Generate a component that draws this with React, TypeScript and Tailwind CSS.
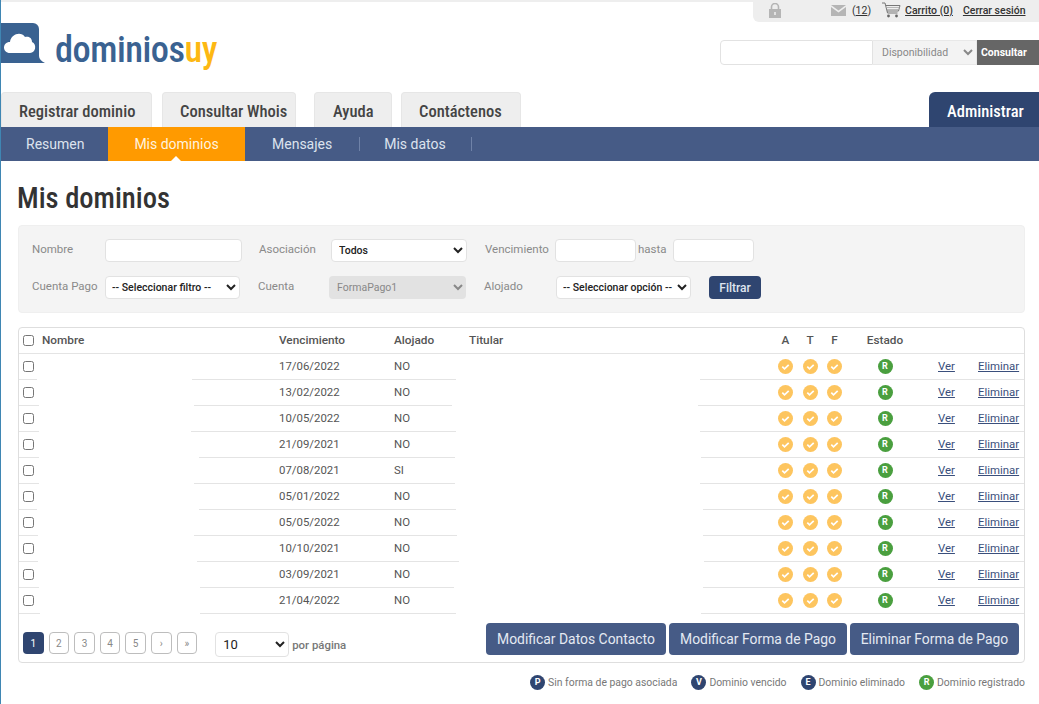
import React from "react";

const rows = [
  { d: "17/06/2022", a: "NO", g: [18, 173], h: [456, 700] },
  { d: "13/02/2022", a: "NO", g: [20, 175], h: [452, 698] },
  { d: "10/05/2022", a: "NO", g: [20, 172], h: [456, 700] },
  { d: "21/09/2021", a: "NO", g: [20, 180], h: [455, 701] },
  { d: "07/08/2021", a: "SI", g: [20, 175], h: [455, 700] },
  { d: "05/01/2022", a: "NO", g: [18, 180], h: [456, 703] },
  { d: "05/05/2022", a: "NO", g: [19, 175], h: [457, 703] },
  { d: "10/10/2021", a: "NO", g: [19, 178], h: [459, 704] },
  { d: "03/09/2021", a: "NO", g: [20, 181], h: [454, 703] },
  { d: "21/04/2022", a: "NO", g: [21, 181], h: [456, 701] },
];

const cols = "grid grid-cols-[23px_236px_116px_74px_305px_25px_24px_25px_76px_55px_1fr] items-center";

function Check() {
  return (
    <svg width="15" height="15" viewBox="0 0 15 15" className="mx-auto block">
      <circle cx="7.5" cy="7.5" r="7.5" fill="#fdc55f" />
      <path d="M4.3 7.7l2.2 2.1 4.2-4" fill="none" stroke="#fff" strokeWidth="1.7" />
    </svg>
  );
}

function Badge({ l, bg }: { l: string; bg: string }) {
  return (
    <span className={`w-[15px] h-[15px] ${bg} rounded-full inline-flex items-center justify-center text-white text-[9px] font-bold leading-none shrink-0`}>{l}</span>
  );
}

function Box() {
  return <input type="checkbox" className="w-[11px] h-[11px] m-0 block" />;
}

const field = "h-[23px] bg-white border border-[#e2e2e2] rounded-[4px]";
const sel = "h-[23px] bg-white border border-[#e2e2e2] rounded-[4px] text-[10.5px] font-medium text-[#222]";
const lab = "text-[11.5px] text-[#8a8a8a]";
const tab = "h-[35px] flex items-center pt-[5px] bg-[#eeeeee] border border-b-0 border-[#e6e6e6] rounded-t-[4px]";

export default function App() {
  return (
    <div className="w-[1039px] h-[704px] overflow-hidden bg-white border-l border-[#3f86b3] font-[Roboto,sans-serif] text-[#555]">
      <header className="h-[92px] flex justify-between border-t-2 border-[#eeeeee]">
        <div className="pt-[21px] flex items-start">
          <svg width="46" height="41" viewBox="0 0 46 41" className="-ml-px block">
            <path d="M0 0h33a6 6 0 0 1 6 6v27q0 4 6 7H0z" fill="#3a6291" />
            <path d="M10 30c-8 0-8-11 0-11 1-8 11-11 15-5 5-1 7 2 7 5 5 2 4 11-2 11z" fill="#fff" />
          </svg>
          <div className="ml-[9px] mt-[5px] text-[36.4px] leading-[44px] font-medium tracking-[-0.5px] [font-stretch:condensed] text-[#3a6291]">
            dominios<span className="text-[#fdb813]">uy</span>
          </div>
        </div>
        <div className="flex flex-col items-end">
          <div className="w-[286px] h-[20px] pb-[3px] bg-[#eeeeee] rounded-bl-[6px] flex items-center text-[10.5px] text-[#333]">
            <svg width="12" height="15" viewBox="0 0 12 15" className="ml-[16px]">
              <path d="M2.5 6V4a3.5 3.5 0 0 1 7 0v2" fill="none" stroke="#b5b5b5" strokeWidth="1.6" />
              <path d="M0 6h12v9H0z" fill="#b5b5b5" />
              <path d="M5.2 9h1.6v3H5.200z" fill="#eee" />
            </svg>
            <svg width="15" height="11" viewBox="0 0 15 11" className="ml-[50px]">
              <path d="M0 0h15L7.500 5.500z" fill="#b5b5b5" />
              <path d="M0 2l7.500 5.500L15 2v9H0z" fill="#b5b5b5" />
            </svg>
            <span className="ml-[6px]">(<u>12</u>)</span>
            <svg width="19" height="16" viewBox="0 0 19 16" className="ml-[11px] -mt-[2px]">
              <path d="M0 1h3l2.500 10h10M3.700 3.500H18l-1.500 5.500H5" fill="none" stroke="#777" strokeWidth="1" />
              <path d="M5 5.500h12.500M5 7.500h12" stroke="#aaa" strokeWidth="0.8" />
              <circle cx="6.500" cy="14" r="1.400" fill="#666" />
              <circle cx="14.500" cy="14" r="1.400" fill="#666" />
            </svg>
            <a className="ml-[4px] underline font-medium">Carrito (0)</a>
            <a className="ml-[10px] underline font-medium">Cerrar sesión</a>
          </div>
          <div className="mt-[18px] flex h-[25px]">
            <input className="w-[153px] bg-white border border-[#e2e2e2] rounded-l-[4px]" />
            <select className="w-[104px] bg-[#f3f3f3] border-y border-r border-[#e8e8e8] text-[10.5px] text-[#888] pl-[5px]">
              <option>Disponibilidad</option>
            </select>
            <button className="w-[62px] bg-[#666666] text-white text-[10.5px] font-bold text-left pl-[4px]">Consultar</button>
          </div>
        </div>
      </header>

      <div className="h-[35px] flex items-end text-[16.5px] font-medium [font-stretch:condensed] text-[#444]">
        <div className={`${tab} w-[151px] pl-[17px]`}>Registrar dominio</div>
        <div className={`${tab} ml-[10px] w-[134px] pl-[17px]`}>Consultar Whois</div>
        <div className={`${tab} ml-[18px] w-[78px] pl-[18px]`}>Ayuda</div>
        <div className={`${tab} ml-[9px] w-[120px] pl-[17px]`}>Contáctenos</div>
        <div className="ml-auto w-[110px] h-[35px] pt-[5px] pl-[18px] flex items-center bg-[#2f4570] text-white rounded-tl-[6px]">Administrar</div>
      </div>

      <nav className="h-[34px] bg-[#465b86] flex items-center text-[14px] text-[#dde3ee]">
        <span className="w-[107px] pl-[25px]">Resumen</span>
        <span className="relative w-[137px] h-full bg-[#ff9a00] flex items-center justify-center text-[#fff3df]">
          Mis dominios
          <span className="absolute bottom-0 left-[63px] w-0 h-0 border-x-[5px] border-x-transparent border-b-[5px] border-b-white" />
        </span>
        <span className="ml-[27px] pr-[27px] border-r border-[#6f82a8] leading-[14px]">Mensajes</span>
        <span className="ml-[24px] pr-[25px] border-r border-[#6f82a8] leading-[14px]">Mis datos</span>
      </nav>

      <main className="pl-[17px] w-[1024px]">
        <h1 className="mt-[19px] -ml-px text-[28.6px] leading-[36px] font-medium [font-stretch:condensed] text-[#333]">Mis dominios</h1>

        <section className="mt-[9px] h-[88px] bg-[#f4f4f4] border border-[#efefef] rounded-[4px] pl-[13px] pt-[13px]">
          <div className="flex items-center h-[23px]">
            <span className={`${lab} w-[73px] -mt-[2px]`}>Nombre</span>
            <input className={`${field} w-[137px]`} />
            <span className={`${lab} ml-[17px] w-[72px] -mt-[2px]`}>Asociación</span>
            <select className={`${sel} w-[136px] pl-[3px]`}><option>Todos</option></select>
            <span className={`${lab} ml-[18px] w-[70px] -mt-[2px]`}>Vencimiento</span>
            <input className={`${field} w-[81px]`} />
            <span className={`${lab} ml-[2px] w-[35px] -mt-[2px]`}>hasta</span>
            <input className={`${field} w-[81px]`} />
          </div>
          <div className="flex items-center h-[23px] mt-[14px]">
            <span className={`${lab} w-[73px] -mt-[2px]`}>Cuenta Pago</span>
            <select className={`${sel} w-[135px] pl-[2px]`}><option>-- Seleccionar filtro --</option></select>
            <span className={`${lab} ml-[18px] w-[71px] -mt-[2px]`}>Cuenta</span>
            <select disabled className="h-[23px] w-[137px] pl-[4px] bg-[#e2e2e2] rounded-[4px] text-[10.5px] text-[#888]"><option>FormaPago1</option></select>
            <span className={`${lab} ml-[18px] w-[72px] -mt-[2px]`}>Alojado</span>
            <select className={`${sel} w-[135px] pl-[2px]`}><option>-- Seleccionar opción --</option></select>
            <button className="ml-[18px] w-[52px] h-[23px] bg-[#2f4570] text-[#dfe5ef] text-[12px] font-medium rounded-[4px]">Filtrar</button>
          </div>
        </section>

        <section className="mt-[14px] h-[336px] border border-[#dedede] rounded-[4px] text-[11.4px]">
          <div className={`${cols} h-[26px] border-b border-[#e4e4e4] text-[11.8px] font-medium text-[#555]`}>
            <span className="pl-[4px]"><Box /></span>
            <span>Nombre</span>
            <span className="pl-px">Vencimiento</span>
            <span>Alojado</span>
            <span className="pl-px">Titular</span>
            <span className="text-center">A</span>
            <span className="text-center">T</span>
            <span className="text-center">F</span>
            <span className="text-center">Estado</span>
            <span />
            <span />
          </div>
          {rows.map((r) => (
            <div key={r.d} className={`${cols} relative h-[26px] border-b border-[#e4e4e4]`}>
              <span className="pl-[4px]"><Box /></span>
              <span />
              <span className="pl-px">{r.d}</span>
              <span>{r.a}</span>
              <span />
              <Check />
              <Check />
              <Check />
              <span className="flex justify-center"><Badge l="R" bg="bg-[#4a9f3f]" /></span>
              <a className="pl-[15px] underline text-[#3a4f7c]">Ver</a>
              <a className="underline text-[#3a4f7c]">Eliminar</a>
              <i className="absolute -bottom-px h-[2px] bg-white" style={{ left: r.g[0], width: r.g[1] - r.g[0] }} />
              <i className="absolute -bottom-px h-[2px] bg-white" style={{ left: r.h[0] - 19, width: r.h[1] - r.h[0] }} />
            </div>
          ))}
          <div className="flex items-start pl-[4px] pr-[5px]">
            <div className="mt-[18px] flex gap-[5px] text-[10px] text-[#888]">
              {["1", "2", "3", "4", "5", "›", "»"].map((p, i) => (
                <span
                  key={p}
                  className={
                    i === 0
                      ? "w-[20.6px] h-[22px] flex items-center justify-center rounded-[4px] bg-[#2f4570] text-white"
                      : "w-[20.6px] h-[22px] flex items-center justify-center rounded-[4px] border border-[#bdbdbd] bg-white"
                  }
                >
                  {p}
                </span>
              ))}
            </div>
            <select className="ml-[18px] mt-[18px] w-[74px] h-[25px] border border-[#e2e2e2] rounded-[4px] bg-white text-[13px] text-[#222] pl-[3px]">
              <option>10</option>
            </select>
            <span className="ml-[3px] mt-[23px] text-[#777] font-medium">por página</span>
            <div className="ml-auto mt-[9px] flex gap-[3px] text-[13.9px] text-[#e4e9f2]">
              <button className="w-[180px] h-[32px] bg-[#465b86] rounded-[4px]">Modificar Datos Contacto</button>
              <button className="w-[178px] h-[32px] bg-[#465b86] rounded-[4px]">Modificar Forma de Pago</button>
              <button className="w-[169px] h-[32px] bg-[#465b86] rounded-[4px]">Eliminar Forma de Pago</button>
            </div>
          </div>
        </section>

        <footer className="mt-[12px] flex justify-end items-center text-[10.4px] text-[#777]">
          <Badge l="P" bg="bg-[#2f4570]" />
          <span className="ml-[3px] mr-[14px]">Sin forma de pago asociada</span>
          <Badge l="V" bg="bg-[#2f4570]" />
          <span className="ml-[3px] mr-[14px]">Dominio vencido</span>
          <Badge l="E" bg="bg-[#2f4570]" />
          <span className="ml-[3px] mr-[14px]">Dominio eliminado</span>
          <Badge l="R" bg="bg-[#4a9f3f]" />
          <span className="ml-[3px]">Dominio registrado</span>
        </footer>
      </main>
    </div>
  );
}
